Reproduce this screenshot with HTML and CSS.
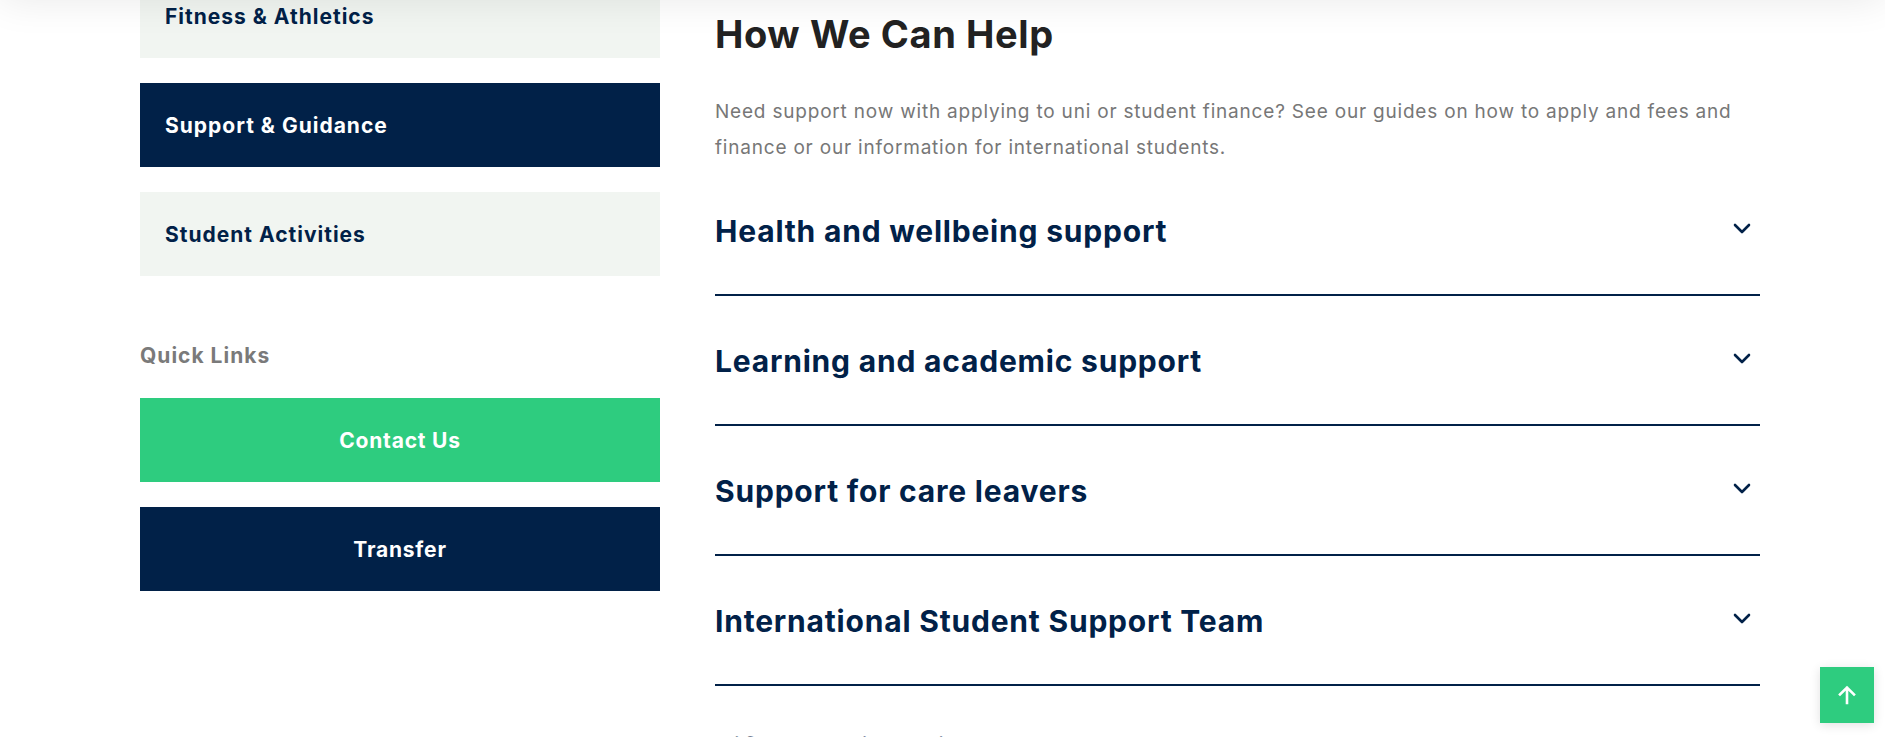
FILE: index.html
```html
<!DOCTYPE html>
<html lang="en">
<head>
<meta charset="utf-8">
<title>How We Can Help</title>
<link rel="stylesheet" href="styles.css">
</head>
<body>
<div class="topbar"></div>
<div class="page">
  <aside class="sidebar">
    <a class="nav-item" href="#">Fitness &amp; Athletics</a>
    <a class="nav-item active" href="#">Support &amp; Guidance</a>
    <a class="nav-item" href="#">Student Activities</a>
    <h3 class="quick-title">Quick Links</h3>
    <a class="btn btn-green" href="#">Contact Us</a>
    <a class="btn btn-navy" href="#">Transfer</a>
  </aside>
  <main class="main">
    <h2 class="title">How We Can Help</h2>
    <p class="intro">Need support now with applying to uni or student finance? See our guides on how to apply and fees and finance or our information for international students.</p>
    <div class="accordion">
      <div class="acc-item">
        <h3 class="acc-title">Health and wellbeing support</h3>
        <svg class="chev" width="18" height="11" viewBox="0 0 18 11"><polyline points="2,2 9,9 16,2" fill="none" stroke="#012148" stroke-width="2.6" stroke-linecap="round" stroke-linejoin="round"/></svg>
      </div>
      <div class="acc-item">
        <h3 class="acc-title">Learning and academic support</h3>
        <svg class="chev" width="18" height="11" viewBox="0 0 18 11"><polyline points="2,2 9,9 16,2" fill="none" stroke="#012148" stroke-width="2.6" stroke-linecap="round" stroke-linejoin="round"/></svg>
      </div>
      <div class="acc-item">
        <h3 class="acc-title">Support for care leavers</h3>
        <svg class="chev" width="18" height="11" viewBox="0 0 18 11"><polyline points="2,2 9,9 16,2" fill="none" stroke="#012148" stroke-width="2.6" stroke-linecap="round" stroke-linejoin="round"/></svg>
      </div>
      <div class="acc-item">
        <h3 class="acc-title">International Student Support Team</h3>
        <svg class="chev" width="18" height="11" viewBox="0 0 18 11"><polyline points="2,2 9,9 16,2" fill="none" stroke="#012148" stroke-width="2.6" stroke-linecap="round" stroke-linejoin="round"/></svg>
      </div>
      <div class="acc-item acc-next">
        <h3 class="acc-title">Life at University</h3>
        <svg class="chev" width="18" height="11" viewBox="0 0 18 11"><polyline points="2,2 9,9 16,2" fill="none" stroke="#012148" stroke-width="2.6" stroke-linecap="round" stroke-linejoin="round"/></svg>
      </div>
    </div>
  </main>
</div>
<a class="to-top" href="#" aria-label="Back to top">
  <svg width="18" height="20" viewBox="0 0 18 20"><path d="M9 18V3M2 9.5L9 2.5l7 7" fill="none" stroke="#fff" stroke-width="2.6" stroke-linecap="square"/></svg>
</a>
</body>
</html>
```
FILE: styles.css
```css
* { box-sizing: border-box; }
html, body { margin: 0; padding: 0; background: #fff; }
body {
  font-family: Inter, "Noto Sans", Arial, sans-serif;
  color: #012148;
  overflow: hidden;
}
a { text-decoration: none; }

.topbar {
  position: fixed;
  top: -80px;
  left: 0;
  right: 0;
  height: 80px;
  background: #fff;
  box-shadow: 0 0 40px rgba(0, 0, 0, 0.09);
  z-index: 5;
}

.page {
  display: flex;
  gap: 55px;
  padding-left: 140px;
  margin-top: -26px;
}

.sidebar {
  width: 520px;
  flex: none;
  display: flex;
  flex-direction: column;
}

.nav-item {
  height: 84px;
  margin-bottom: 25px;
  display: flex;
  align-items: center;
  padding: 0 25px;
  background: #f1f5f1;
  color: #012148;
  font-weight: 700;
  font-size: 21px;
  letter-spacing: 1px;
}
.nav-item.active {
  background: #012148;
  color: #fff;
}

.quick-title {
  margin: 43px 0 30px;
  font-size: 21px;
  line-height: 24px;
  font-weight: 700;
  letter-spacing: 1px;
  color: #7a7a7a;
}

.btn {
  height: 84px;
  margin-bottom: 25px;
  display: flex;
  align-items: center;
  justify-content: center;
  color: #fff;
  font-weight: 700;
  font-size: 21px;
  letter-spacing: 0.8px;
}
.btn-green { background: #2ecc7f; }
.btn-navy { background: #012148; }

.main {
  width: 1045px;
  flex: none;
  padding-top: 38px;
}

.title {
  margin: 0;
  font-size: 38px;
  line-height: 44px;
  font-weight: 700;
  letter-spacing: 0.6px;
  color: #222;
}

.intro {
  margin: 38px 0 0;
  font-size: 19px;
  line-height: 36px;
  letter-spacing: 0.8px;
  color: #777;
}

.acc-item {
  display: flex;
  align-items: center;
  justify-content: space-between;
  padding: 48px 9px 46px 0;
  border-bottom: 2px solid #012148;
}
.acc-item.acc-next { padding-top: 46px; }

.acc-title {
  margin: 0;
  font-size: 30px;
  line-height: 34px;
  font-weight: 700;
  letter-spacing: 0.8px;
  color: #012148;
}

.chev { display: block; margin-top: -6px; }

.to-top {
  position: fixed;
  right: 11px;
  bottom: 14px;
  width: 54px;
  height: 56px;
  background: #2ecc7f;
  display: flex;
  align-items: center;
  justify-content: center;
  box-shadow: 0 2px 10px rgba(0, 0, 0, 0.12);
  z-index: 6;
}
.to-top svg { display: block; }
```
